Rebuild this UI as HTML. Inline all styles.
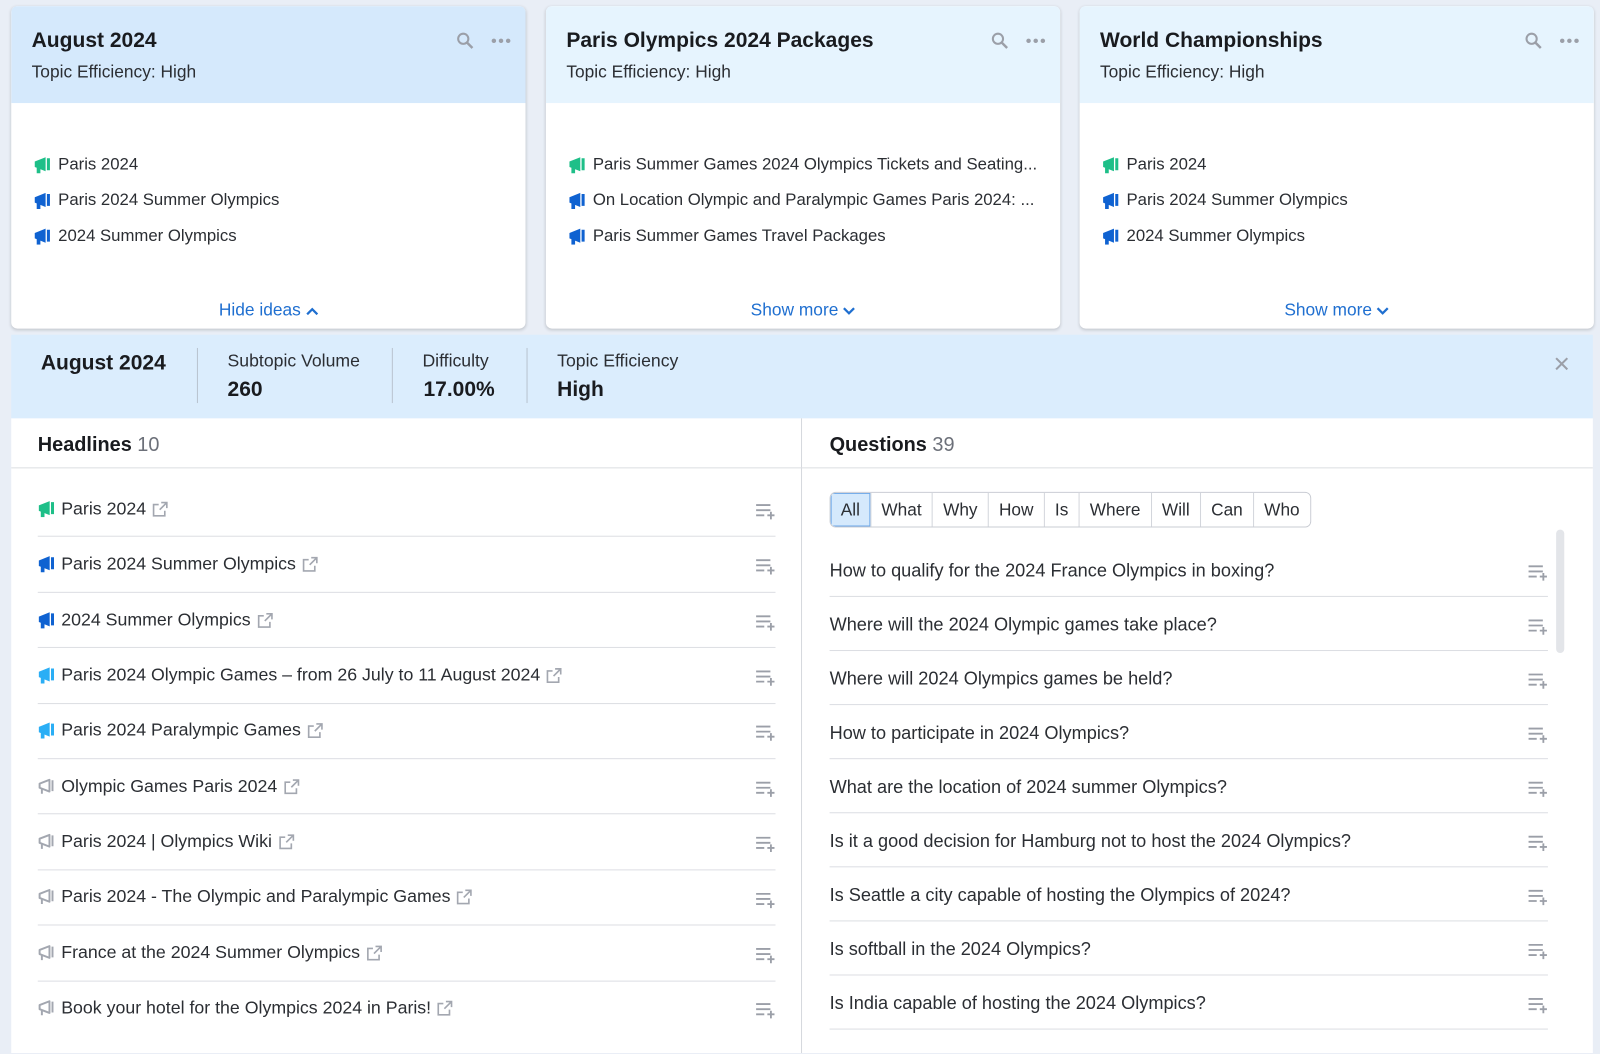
<!DOCTYPE html>
<html><head><meta charset="utf-8"><style>
*{box-sizing:border-box;margin:0;padding:0}
body{width:1600px;height:1054px;background:#e9eef6;font-family:"Liberation Sans",Arial,sans-serif;color:#2b2e33;position:relative;overflow:hidden}
#w{position:absolute;left:0;top:0;width:1568px;height:1033px;transform:scale(1.0204);transform-origin:0 0}
.card{position:absolute;top:6px;width:504px;height:316px;background:#fff;border-radius:6px;box-shadow:0 1px 3px rgba(0,0,0,.18);overflow:hidden}
.card .hd{height:95px;background:#e6f4fe;padding:22px 0 0 20px;position:relative}
.card.sel .hd{background:#d5e9fc}
.card h3{font-size:20.6px;font-weight:bold;color:#191b1f}
.card .eff{font-size:17px;margin-top:9px}
.card .ic{position:absolute;top:25px;right:14px;display:flex;gap:16px;align-items:center}
.card ul{list-style:none;position:absolute;top:138px;left:22px}
.card li{height:35px;font-size:16.4px;display:flex;align-items:center;white-space:nowrap}
.card li svg{margin-right:7px}
.card .more{position:absolute;bottom:8px;left:0;right:0;text-align:center;color:#1f6fd0;font-size:17px}
.abs{position:absolute}
.mh{position:absolute;font-size:17.4px;display:flex;align-items:center;white-space:nowrap}
.mh .m{margin-right:6px}
.mh .e{margin-left:6px}
.q{font-size:17.8px}
.sep{position:absolute;height:1px;background:#dcdee3}
.add{position:absolute}
.tabs{position:absolute;left:813px;top:482px;height:35px;display:flex;border:1px solid #c9ccd3;border-radius:6px;overflow:hidden;font-size:16.9px}
.tabs div{padding:0 10px;line-height:33px;border-left:1px solid #d3d6dc;background:#fff}
.tabs div:first-child{border-left:none;background:#d5e9fc;box-shadow:inset 0 0 0 1px #6aa6e8}
</style></head><body>

<svg width="0" height="0" style="position:absolute"><defs>
<symbol id="mg" viewBox="0 0 16 16"><path d="M1 5L11 1V14L1 10Z M2.8 9.5H6.2V15.8H2.8Z M12.2 2H15V13H12.2Z"/></symbol>
<symbol id="mo" viewBox="0 0 16 16"><path d="M1.7 5.6L10.8 2.1V12.9L1.7 9.4Z M3.8 9.6V15 M13.6 2.5V12.5" fill="none" stroke="#a3a7b0" stroke-width="1.8" stroke-linejoin="round"/></symbol>
<symbol id="ext" viewBox="0 0 16 16"><path d="M9 1.5H14.5V7 M14.5 1.5L7.5 8.5 M12.5 9.5V14.5H1.5V3.5H6.5" fill="none" stroke="#a3a7b0" stroke-width="1.6"/></symbol>
<symbol id="ad" viewBox="0 0 20 18"><path d="M1 3H15 M1 8H15 M1 13H9 M12 13H19 M15.5 9.5V17" fill="none" stroke="#9b9fa8" stroke-width="1.8"/></symbol>
<symbol id="sr" viewBox="0 0 18 18"><circle cx="7" cy="7" r="5" fill="none" stroke="#9b9fa8" stroke-width="2"/><path d="M10.5 10.5L16 16" stroke="#9b9fa8" stroke-width="2.4"/></symbol>
</defs></svg>

<div id="w">
<div class="card sel" style="left:11px">
 <div class="hd"><h3>August 2024</h3><div class="eff">Topic Efficiency: High</div>
 <div class="ic"><svg width="18" height="18"><use href="#sr"/></svg><svg width="20" height="6"><circle cx="3" cy="3" r="2.2" fill="#9b9fa8"/><circle cx="10" cy="3" r="2.2" fill="#9b9fa8"/><circle cx="17" cy="3" r="2.2" fill="#9b9fa8"/></svg></div></div>
 <ul><li><svg width="17" height="17" fill="#1ebf88"><use href="#mg"/></svg>Paris 2024</li>
 <li><svg width="17" height="17" fill="#0f62d1"><use href="#mg"/></svg>Paris 2024 Summer Olympics</li>
 <li><svg width="17" height="17" fill="#0f62d1"><use href="#mg"/></svg>2024 Summer Olympics</li></ul>
 <div class="more">Hide ideas <svg width="12" height="8"><path d="M1 7L6 2L11 7" fill="none" stroke="#1f6fd0" stroke-width="2.2"/></svg></div>
</div>
<div class="card" style="left:535px">
 <div class="hd"><h3>Paris Olympics 2024 Packages</h3><div class="eff">Topic Efficiency: High</div>
 <div class="ic"><svg width="18" height="18"><use href="#sr"/></svg><svg width="20" height="6"><circle cx="3" cy="3" r="2.2" fill="#9b9fa8"/><circle cx="10" cy="3" r="2.2" fill="#9b9fa8"/><circle cx="17" cy="3" r="2.2" fill="#9b9fa8"/></svg></div></div>
 <ul><li><svg width="17" height="17" fill="#1ebf88"><use href="#mg"/></svg>Paris Summer Games 2024 Olympics Tickets and Seating...</li>
 <li><svg width="17" height="17" fill="#0f62d1"><use href="#mg"/></svg>On Location Olympic and Paralympic Games Paris 2024: ...</li>
 <li><svg width="17" height="17" fill="#0f62d1"><use href="#mg"/></svg>Paris Summer Games Travel Packages</li></ul>
 <div class="more">Show more <svg width="12" height="8"><path d="M1 1L6 6L11 1" fill="none" stroke="#1f6fd0" stroke-width="2.2"/></svg></div>
</div>
<div class="card" style="left:1058px">
 <div class="hd"><h3>World Championships</h3><div class="eff">Topic Efficiency: High</div>
 <div class="ic"><svg width="18" height="18"><use href="#sr"/></svg><svg width="20" height="6"><circle cx="3" cy="3" r="2.2" fill="#9b9fa8"/><circle cx="10" cy="3" r="2.2" fill="#9b9fa8"/><circle cx="17" cy="3" r="2.2" fill="#9b9fa8"/></svg></div></div>
 <ul><li><svg width="17" height="17" fill="#1ebf88"><use href="#mg"/></svg>Paris 2024</li>
 <li><svg width="17" height="17" fill="#0f62d1"><use href="#mg"/></svg>Paris 2024 Summer Olympics</li>
 <li><svg width="17" height="17" fill="#0f62d1"><use href="#mg"/></svg>2024 Summer Olympics</li></ul>
 <div class="more">Show more <svg width="12" height="8"><path d="M1 1L6 6L11 1" fill="none" stroke="#1f6fd0" stroke-width="2.2"/></svg></div>
</div>

<div class="abs" style="left:11px;top:328px;width:1550px;height:82px;background:#dbedfd"></div>
<div class="abs" style="left:40px;top:344px;font-size:20.6px;font-weight:bold;color:#191b1f">August 2024</div>
<div class="abs" style="left:193px;top:341px;width:1px;height:54px;background:#b9c3cf"></div>
<div class="abs" style="left:223px;top:343px;font-size:17.3px">Subtopic Volume</div>
<div class="abs" style="left:223px;top:370px;font-size:20.6px;font-weight:bold;color:#191b1f">260</div>
<div class="abs" style="left:384px;top:341px;width:1px;height:54px;background:#b9c3cf"></div>
<div class="abs" style="left:414px;top:343px;font-size:17.3px">Difficulty</div>
<div class="abs" style="left:415px;top:370px;font-size:20.6px;font-weight:bold;color:#191b1f">17.00%</div>
<div class="abs" style="left:516px;top:341px;width:1px;height:54px;background:#b9c3cf"></div>
<div class="abs" style="left:546px;top:343px;font-size:17.3px">Topic Efficiency</div>
<div class="abs" style="left:546px;top:370px;font-size:20.6px;font-weight:bold;color:#191b1f">High</div>
<svg class="abs" style="left:1524px;top:350px" width="13" height="13"><path d="M1 1L12 12M12 1L1 12" stroke="#9b9fa8" stroke-width="2"/></svg>

<div class="abs" style="left:11px;top:410px;width:1550px;height:622px;background:#fff"></div>
<div class="abs" style="left:785px;top:410px;width:1px;height:622px;background:#d6d9de"></div>
<div class="sep" style="left:11px;top:458px;width:1550px"></div>
<div class="abs" style="left:37px;top:425px;font-size:19.5px"><b style="color:#191b1f">Headlines</b> <span style="color:#6c7079">10</span></div>
<div class="abs" style="left:813px;top:425px;font-size:19.5px"><b style="color:#191b1f">Questions</b> <span style="color:#6c7079">39</span></div>

<div class="tabs"><div>All</div><div>What</div><div>Why</div><div>How</div><div>Is</div><div>Where</div><div>Will</div><div>Can</div><div>Who</div></div>
<div class="abs" style="left:1525px;top:519px;width:8px;height:121px;border-radius:4px;background:#e3e5e9"></div>

<div class="mh" style="left:37px;top:488px"><svg class="m" width="17" height="17" fill="#1ebf88"><use href="#mg"/></svg>Paris 2024<svg class="e" width="16" height="16"><use href="#ext"/></svg></div>
<div class="mh" style="left:37px;top:542px"><svg class="m" width="17" height="17" fill="#0f62d1"><use href="#mg"/></svg>Paris 2024 Summer Olympics<svg class="e" width="16" height="16"><use href="#ext"/></svg></div>
<div class="mh" style="left:37px;top:597px"><svg class="m" width="17" height="17" fill="#0f62d1"><use href="#mg"/></svg>2024 Summer Olympics<svg class="e" width="16" height="16"><use href="#ext"/></svg></div>
<div class="mh" style="left:37px;top:651px"><svg class="m" width="17" height="17" fill="#2aaef5"><use href="#mg"/></svg>Paris 2024 Olympic Games – from 26 July to 11 August 2024<svg class="e" width="16" height="16"><use href="#ext"/></svg></div>
<div class="mh" style="left:37px;top:705px"><svg class="m" width="17" height="17" fill="#2aaef5"><use href="#mg"/></svg>Paris 2024 Paralympic Games<svg class="e" width="16" height="16"><use href="#ext"/></svg></div>
<div class="mh" style="left:37px;top:760px"><svg class="m" width="17" height="17"><use href="#mo"/></svg>Olympic Games Paris 2024<svg class="e" width="16" height="16"><use href="#ext"/></svg></div>
<div class="mh" style="left:37px;top:814px"><svg class="m" width="17" height="17"><use href="#mo"/></svg>Paris 2024 | Olympics Wiki<svg class="e" width="16" height="16"><use href="#ext"/></svg></div>
<div class="mh" style="left:37px;top:868px"><svg class="m" width="17" height="17"><use href="#mo"/></svg>Paris 2024 - The Olympic and Paralympic Games<svg class="e" width="16" height="16"><use href="#ext"/></svg></div>
<div class="mh" style="left:37px;top:923px"><svg class="m" width="17" height="17"><use href="#mo"/></svg>France at the 2024 Summer Olympics<svg class="e" width="16" height="16"><use href="#ext"/></svg></div>
<div class="mh" style="left:37px;top:977px"><svg class="m" width="17" height="17"><use href="#mo"/></svg>Book your hotel for the Olympics 2024 in Paris!<svg class="e" width="16" height="16"><use href="#ext"/></svg></div>

<div class="sep" style="left:37px;top:525px;width:723px"></div>
<div class="sep" style="left:37px;top:580px;width:723px"></div>
<div class="sep" style="left:37px;top:634px;width:723px"></div>
<div class="sep" style="left:37px;top:689px;width:723px"></div>
<div class="sep" style="left:37px;top:743px;width:723px"></div>
<div class="sep" style="left:37px;top:797px;width:723px"></div>
<div class="sep" style="left:37px;top:852px;width:723px"></div>
<div class="sep" style="left:37px;top:906px;width:723px"></div>
<div class="sep" style="left:37px;top:961px;width:723px"></div>

<svg class="add" style="left:740px;top:492px" width="20" height="18"><use href="#ad"/></svg>
<svg class="add" style="left:740px;top:546px" width="20" height="18"><use href="#ad"/></svg>
<svg class="add" style="left:740px;top:601px" width="20" height="18"><use href="#ad"/></svg>
<svg class="add" style="left:740px;top:655px" width="20" height="18"><use href="#ad"/></svg>
<svg class="add" style="left:740px;top:709px" width="20" height="18"><use href="#ad"/></svg>
<svg class="add" style="left:740px;top:764px" width="20" height="18"><use href="#ad"/></svg>
<svg class="add" style="left:740px;top:818px" width="20" height="18"><use href="#ad"/></svg>
<svg class="add" style="left:740px;top:873px" width="20" height="18"><use href="#ad"/></svg>
<svg class="add" style="left:740px;top:927px" width="20" height="18"><use href="#ad"/></svg>
<svg class="add" style="left:740px;top:981px" width="20" height="18"><use href="#ad"/></svg>

<div class="mh q" style="left:813px;top:549px">How to qualify for the 2024 France Olympics in boxing?</div>
<div class="mh q" style="left:813px;top:602px">Where will the 2024 Olympic games take place?</div>
<div class="mh q" style="left:813px;top:655px">Where will 2024 Olympics games be held?</div>
<div class="mh q" style="left:813px;top:708px">How to participate in 2024 Olympics?</div>
<div class="mh q" style="left:813px;top:761px">What are the location of 2024 summer Olympics?</div>
<div class="mh q" style="left:813px;top:814px">Is it a good decision for Hamburg not to host the 2024 Olympics?</div>
<div class="mh q" style="left:813px;top:867px">Is Seattle a city capable of hosting the Olympics of 2024?</div>
<div class="mh q" style="left:813px;top:920px">Is softball in the 2024 Olympics?</div>
<div class="mh q" style="left:813px;top:973px">Is India capable of hosting the 2024 Olympics?</div>

<div class="sep" style="left:813px;top:584px;width:704px"></div>
<div class="sep" style="left:813px;top:637px;width:704px"></div>
<div class="sep" style="left:813px;top:690px;width:704px"></div>
<div class="sep" style="left:813px;top:743px;width:704px"></div>
<div class="sep" style="left:813px;top:796px;width:704px"></div>
<div class="sep" style="left:813px;top:849px;width:704px"></div>
<div class="sep" style="left:813px;top:902px;width:704px"></div>
<div class="sep" style="left:813px;top:955px;width:704px"></div>
<div class="sep" style="left:813px;top:1008px;width:704px"></div>

<svg class="add" style="left:1497px;top:552px" width="20" height="18"><use href="#ad"/></svg>
<svg class="add" style="left:1497px;top:605px" width="20" height="18"><use href="#ad"/></svg>
<svg class="add" style="left:1497px;top:658px" width="20" height="18"><use href="#ad"/></svg>
<svg class="add" style="left:1497px;top:711px" width="20" height="18"><use href="#ad"/></svg>
<svg class="add" style="left:1497px;top:764px" width="20" height="18"><use href="#ad"/></svg>
<svg class="add" style="left:1497px;top:817px" width="20" height="18"><use href="#ad"/></svg>
<svg class="add" style="left:1497px;top:870px" width="20" height="18"><use href="#ad"/></svg>
<svg class="add" style="left:1497px;top:923px" width="20" height="18"><use href="#ad"/></svg>
<svg class="add" style="left:1497px;top:976px" width="20" height="18"><use href="#ad"/></svg>
</div>
</body></html>
